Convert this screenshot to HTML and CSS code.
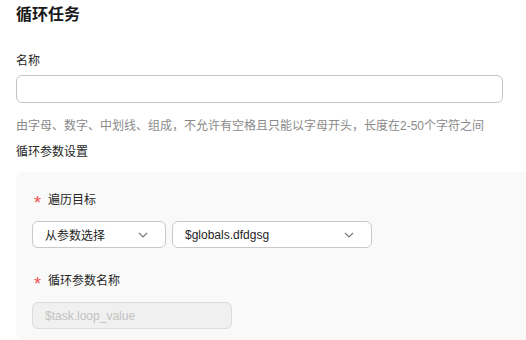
FILE: index.html
```html
<!DOCTYPE html>
<html lang="zh-CN">
<head>
    <meta charset="UTF-8">
    <meta name="viewport" content="width=device-width, initial-scale=1.0">
    <title>循环任务</title>
    <link rel="stylesheet" href="styles.css">
</head>
<body>
    <div class="page">
        <h1 class="title">循环任务</h1>

        <div class="field name-field">
            <label class="label">名称</label>
            <input class="input" type="text">
            <p class="hint">由字母、数字、中划线、组成，不允许有空格且只能以字母开头，长度在2-50个字符之间</p>
        </div>

        <div class="section-title">循环参数设置</div>

        <div class="panel">
            <div class="field">
                <label class="label required"><span class="star">*</span>遍历目标</label>
                <div class="select-row">
                    <div class="select small">
                        <span>从参数选择</span>
                        <svg class="arrow" width="10" height="6" viewBox="0 0 10 6"><path d="M1 1 L5 5 L9 1" fill="none" stroke="#777" stroke-width="1.1"/></svg>
                    </div>
                    <div class="select large">
                        <span>$globals.dfdgsg</span>
                        <svg class="arrow" width="10" height="6" viewBox="0 0 10 6"><path d="M1 1 L5 5 L9 1" fill="none" stroke="#777" stroke-width="1.1"/></svg>
                    </div>
                </div>
            </div>

            <div class="field">
                <label class="label required"><span class="star">*</span>循环参数名称</label>
                <input class="input disabled" type="text" placeholder="$task.loop_value" disabled>
            </div>
        </div>
    </div>
</body>
</html>
```

FILE: styles.css
```css
* {
    margin: 0;
    padding: 0;
    box-sizing: border-box;
}
body {
    font-family: "Liberation Sans", "Noto Sans CJK SC", sans-serif;
    font-size: 12px;
    color: #252525;
    background: #fff;
    overflow: hidden;
}

.page {
    padding: 3px 0 0 16px;
}
.title {
    font-size: 16px;
    font-weight: 700;
    line-height: 24px;
    color: #191919;
}

.field {
    display: flex;
    flex-direction: column;
}
.name-field {
    width: 487px;
    margin-top: 25px;
}
.label {
    line-height: 18px;
    margin-bottom: 5px;
}
.label.required {
    display: flex;
    align-items: center;
    margin-bottom: 12px;
}
.star {
    display: inline-block;
    width: 16px;
    height: 18px;
    padding: 3px 0 0 2px;
    color: #ef5050;
    font-size: 18px;
    line-height: 18px;
}
.input {
    height: 28px;
    border: 1px solid #c4c4c4;
    border-radius: 6px;
    background: #fff;
    padding: 0 12px;
    font-family: inherit;
    font-size: 12px;
    outline: none;
}
.input.disabled {
    width: 200px;
    height: 27px;
    background: #f0f0f0;
    border-color: #dcdcdc;
}
.input.disabled::placeholder {
    color: #c2c2c2;
}
.hint {
    color: #8a8a8a;
    line-height: 18px;
    margin-top: 14px;
}

.section-title {
    line-height: 18px;
    margin-top: 8px;
}

.panel {
    margin-top: 11px;
    background: #f9f9f9;
    border-radius: 8px 0 0 8px;
    padding: 19px 16px 12px;
    display: flex;
    flex-direction: column;
    gap: 24px;
}
.select-row {
    display: flex;
    gap: 6px;
}
.select {
    height: 27px;
    border: 1px solid #c8c8c8;
    border-radius: 6px;
    background: #fff;
    display: flex;
    align-items: center;
    justify-content: space-between;
    padding: 0 17px 0 12px;
    font-size: 12px;
}
.select.small {
    width: 134px;
}
.select.large {
    width: 200px;
}
.arrow {
    display: block;
}
```
